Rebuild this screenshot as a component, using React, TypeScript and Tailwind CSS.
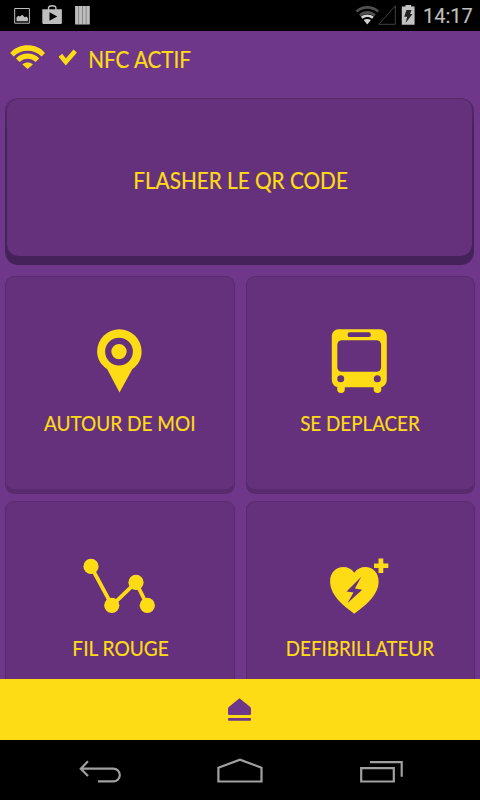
import type { ReactNode } from 'react';

const PinIcon = () => (
  <svg className="h-[90px] w-20" viewBox="80 310 80 90" fill="#fddc16">
    <path d="M119.4 329.3a22.3 22.3 0 0 1 22.2 22.3c0 7.6-3.3 13.4-9.2 17.5L119.5 392.5 107.1 369.1c-6.1-4.1-10-9.9-10-17.5a22.3 22.3 0 0 1 22.3-22.3Z" />
    <circle cx="119" cy="351.6" r="10.8" fill="none" stroke="#65317d" strokeWidth="6.2" />
  </svg>
);

const BusIcon = () => (
  <svg className="h-[90px] w-20" viewBox="320 310 80 90">
    <path fill="#fddc16" d="M338.3 329.3h42a6.5 6.5 0 0 1 6.5 6.5v43.5c0 4.5-2.5 7.2-5.5 7.8v2.2a3.8 3.8 0 0 1-7.6 0v-2.1h-28.9v2.1a3.8 3.8 0 0 1-7.6 0v-2.2c-3-.6-5.4-3.3-5.4-7.8v-43.5a6.5 6.5 0 0 1 6.5-6.5Z" />
    <g fill="#65317d">
      <rect x="347.6" y="332.3" width="23.2" height="4.8" rx="2.2" />
      <rect x="337.3" y="340.2" width="43.8" height="31.5" rx="4.5" />
      <circle cx="340.7" cy="378.7" r="3.5" />
      <circle cx="377.3" cy="378.7" r="3.5" />
    </g>
  </svg>
);

const RouteIcon = () => (
  <svg className="h-[90px] w-20" viewBox="80 535 80 90" fill="#fddc16">
    <path d="M91 566.5 112 605.3 136 582.3 147.3 605.3" fill="none" stroke="#fddc16" strokeWidth="3.8" />
    <circle cx="91" cy="566.4" r="7.6" />
    <circle cx="111.8" cy="605.3" r="7.6" />
    <circle cx="136" cy="582.4" r="7.6" />
    <circle cx="147.3" cy="605.3" r="7.6" />
  </svg>
);

const HeartIcon = () => (
  <svg className="h-[90px] w-20" viewBox="320 535 80 90" fill="#fddc16">
    <path d="M354.3 572.7c-3-3.8-6.5-5.6-10.8-5.6-7.7 0-13.4 6-13.4 14.2 0 7.9 3.9 14.3 9.8 20.5 4.2 4.4 9.2 8.2 14.3 11.9 5.3-3.8 10.5-7.7 14.7-12.1 5.7-6 9.7-12.4 9.7-20.3 0-8.2-5.7-14.2-13.4-14.2-4.3 0-7.9 1.8-10.9 5.6Z" />
    <path fill="#65317d" d="m361.3 576.7-14.8 14.8 7 1.1-6.1 10.7 14.8-13.6-7.3-1.1Z" />
    <path d="M378.5 558.5h4.8v4.9h5v4.7h-5v5h-4.8v-5H374v-4.7h4.5Z" />
  </svg>
);

const tiles: { label: string; labelClass: string; icon: ReactNode }[] = [
  { label: 'AUTOUR DE MOI', labelClass: 'scale-x-[0.864]', icon: <PinIcon /> },
  { label: 'SE DEPLACER', labelClass: 'scale-x-[0.855]', icon: <BusIcon /> },
  { label: 'FIL ROUGE', labelClass: 'scale-x-[0.868] translate-x-px', icon: <RouteIcon /> },
  { label: 'DEFIBRILLATEUR', labelClass: 'scale-x-[0.852]', icon: <HeartIcon /> },
];

function StatusBar() {
  return (
    <div className="flex h-[31px] shrink-0 items-center justify-between bg-black">
      <svg className="h-[31px] w-[100px]" viewBox="0 0 100 31">
        <path d="M14.7 8.5h14.7v14.7H14.7Z" fill="none" stroke="#bebebe" />
        <path fill="#bebebe" d="M16.5 21.3v-4l2-1.5 1.4.8 2.5-1.8 2.2 2.4 1.7-.7 1.6 1.5v3.3Z" />
        <path d="M48.5 10V8c0-1.4 1.4-2.3 3.7-2.3s3.7.9 3.7 2.3v2" fill="none" stroke="#bebebe" strokeWidth="1.4" />
        <path fill="#bebebe" d="M42.3 9.2h19.6v13.2c0 .9-.6 1.6-1.5 1.6H43.8c-.9 0-1.5-.7-1.5-1.6Z" />
        <path d="m49.5 12.3 7.7 4.2-7.7 4.2Z" />
        <path fill="#bebebe" d="M75.1 6h14.7v18.5H75.1Z" />
        <path stroke="#777" strokeWidth=".8" d="M78.6 6v18.5M82.5 6v18.5M86.2 6v18.5" />
      </svg>
      <div className="flex items-center">
        <svg className="h-[31px] w-[64px]" viewBox="354 0 64 31">
          <g fill="none" strokeWidth="2.7">
            <path stroke="#505050" d="M356.5 11.5c6.4-5.4 15.2-5.4 21.7 0M359.8 15.2c4.4-3.8 10.6-3.8 15.1 0" />
          </g>
          <path fill="#d2d2d2" d="M360.8 16.7c3.8-3 9.2-3 13 0l-1.7 2c-2.8-2.2-6.7-2.2-9.5 0ZM363.7 20.1c2.2-1.6 5-1.6 7.2 0l-3.6 4.3Z" />
          <path d="M395.3 5.8v18.5h-16.5Z" fill="none" stroke="#414141" />
          <path fill="#c2c2c2" d="M405.5 5h5.7v1.6h3.4v18.2h-12.8V6.6h3.7Z" />
          <path fill="#222" d="M406.5 10h5l-1.5 4h2.5l-6.9 8.9 1.6-6.2h-3Z" />
        </svg>
        <span className="w-[62px] whitespace-nowrap pl-[5px] font-['Roboto',sans-serif] text-[20px] leading-none text-[#bebebe]">14:17</span>
      </div>
    </div>
  );
}

function Header() {
  return (
    <header className="flex h-[67px] shrink-0 items-start">
      <svg className="h-[60px] w-[82px] shrink-0" viewBox="0 31 82 60">
        <path fill="#fddc16" d="M10.2 52.9C18.5 42.6 37 42.6 45 52.9l-3.4 3.5c-7.2-7.6-20.9-7.6-27.9 0Z" />
        <path fill="#fddc16" d="M16 58.4c5.6-6.6 17.6-6.6 23.2 0l-3.6 3.7c-4.2-4.5-11.7-4.5-15.9 0ZM22.4 64.4c3-2.5 7.4-2.5 10.5 0l-5.3 4.7Z" />
        <path fill="none" stroke="#fddc16" strokeWidth="4.6" d="m60.4 55.2 5.4 6.8L75.2 51" />
      </svg>
      <h1 className="mt-[12px] origin-left scale-x-[0.88] whitespace-nowrap pl-[7px] text-[23.5px] leading-[32px]">NFC ACTIF</h1>
    </header>
  );
}

function Tile({ label, labelClass, icon }: { label: string; labelClass: string; icon: ReactNode }) {
  return (
    <button className="h-[218px] overflow-hidden rounded-[9px] bg-[#592b6e] px-px pt-px pb-[5px]">
      <span className="flex h-full flex-col items-center rounded-[8px] bg-[#65317d] pt-[33px]">
        {icon}
        <span className={`mt-[7px] whitespace-nowrap text-[22px] leading-8 ${labelClass}`}>{label}</span>
      </span>
    </button>
  );
}

function NavBar() {
  return (
    <nav className="h-[60px] shrink-0 bg-black">
      <svg className="h-[60px] w-[480px]" viewBox="0 740 480 60" fill="none" stroke="#a0a0a0" strokeWidth="2.2">
        <path d="M80.5 768.7h33a6.3 6.3 0 0 1 0 12.6H98M88 761.3l-7.2 7.4 7.2 7.3" />
        <path d="M218.4 781.5v-13.8l21.6-8 21.5 8v13.8Z" />
        <path d="M361.2 768.2h32.6v13.3h-32.6ZM370 762.2h31.7v14.5" />
      </svg>
    </nav>
  );
}

export default function App() {
  return (
    <div className="flex h-[800px] w-[480px] flex-col overflow-hidden bg-[#6f378a] font-['Lato','Open_Sans',sans-serif] text-[#fddc16] [-webkit-text-stroke-width:0.2px]">
      <StatusBar />
      <Header />
      <main className="min-h-0 flex-1 overflow-hidden px-[5px]">
        <button className="block h-[167px] w-[469px] rounded-[13px] bg-linear-to-b from-[#592b6e] from-0% to-[#45235a] to-20% px-[2px] pt-px pb-[9px]">
          <span className="flex h-full items-center justify-center rounded-[12px] bg-[#65317d] pt-[6px] text-[23.5px]">
            <span className="scale-x-[0.883] translate-x-px whitespace-nowrap">FLASHER LE QR CODE</span>
          </span>
        </button>
        <div className="mt-[11px] grid grid-cols-2 gap-x-[11px] gap-y-[7px]">
          {tiles.map((tile) => (
            <Tile key={tile.label} {...tile} />
          ))}
        </div>
      </main>
      <footer className="flex h-[61px] shrink-0 justify-center bg-[#fddc16]">
        <svg className="h-[61px] w-10" viewBox="220 679 40 61" fill="#6f378a">
          <path d="M239.5 698.2 250 706.7c.7.6 1 1.2 1 2v5.1c0 .7-.4 1.1-1 1.1h-21c-.6 0-1-.4-1-1.1v-5.1c0-.8.3-1.4 1-2Z" />
          <rect x="228" y="718" width="23" height="2.7" rx=".8" />
        </svg>
      </footer>
      <NavBar />
    </div>
  );
}
